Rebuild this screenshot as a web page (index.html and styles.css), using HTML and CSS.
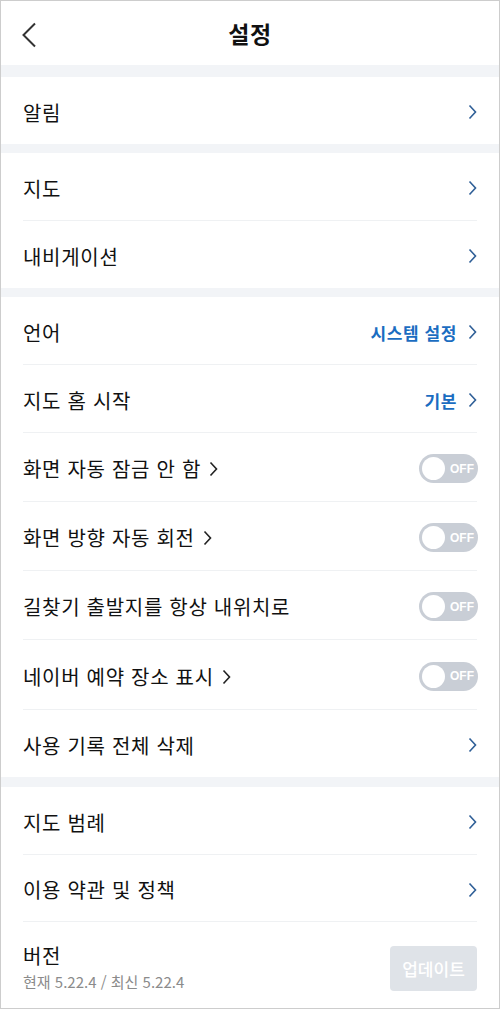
FILE: index.html
```html
<!DOCTYPE html>
<html lang="ko">
<head>
<meta charset="utf-8">
<title>설정</title>
<link rel="stylesheet" href="styles.css">
</head>
<body>
<div class="screen">
  <header class="header">
    <svg class="back" width="16" height="26" viewBox="0 0 16 26"><path d="M14 1.5 L2.5 13 L14 24.5" fill="none" stroke="#333" stroke-width="2"/></svg>
    <h1 class="title">설정</h1>
  </header>

  <div class="gap gap-12"></div>
  <section class="group">
    <div class="row last h67"><span class="label">알림</span><svg class="chev" width="9" height="16" viewBox="0 0 9 16"><path d="M1.5 1.5 L7.5 8 L1.5 14.5" fill="none" stroke="#2f5f97" stroke-width="1.6"/></svg></div>
  </section>

  <div class="gap gap-9"></div>
  <section class="group">
    <div class="row h68"><span class="label">지도</span><svg class="chev" width="9" height="16" viewBox="0 0 9 16"><path d="M1.5 1.5 L7.5 8 L1.5 14.5" fill="none" stroke="#2f5f97" stroke-width="1.6"/></svg></div>
    <div class="row last h67"><span class="label">내비게이션</span><svg class="chev" width="9" height="16" viewBox="0 0 9 16"><path d="M1.5 1.5 L7.5 8 L1.5 14.5" fill="none" stroke="#2f5f97" stroke-width="1.6"/></svg></div>
  </section>

  <div class="gap gap-9"></div>
  <section class="group">
    <div class="row h68"><span class="label">언어</span><span class="value">시스템 설정<svg class="chev" width="9" height="16" viewBox="0 0 9 16"><path d="M1.5 1.5 L7.5 8 L1.5 14.5" fill="none" stroke="#2f5f97" stroke-width="1.6"/></svg></span></div>
    <div class="row h68"><span class="label">지도 홈 시작</span><span class="value">기본<svg class="chev" width="9" height="16" viewBox="0 0 9 16"><path d="M1.5 1.5 L7.5 8 L1.5 14.5" fill="none" stroke="#2f5f97" stroke-width="1.6"/></svg></span></div>
    <div class="row h69"><span class="label">화면 자동 잠금 안 함<svg class="inchev" width="9" height="16" viewBox="0 0 9 16"><path d="M1.5 1.5 L7.5 8 L1.5 14.5" fill="none" stroke="#222" stroke-width="1.6"/></svg></span><span class="toggle"><span class="knob"></span><span class="off">OFF</span></span></div>
    <div class="row h69"><span class="label">화면 방향 자동 회전<svg class="inchev" width="9" height="16" viewBox="0 0 9 16"><path d="M1.5 1.5 L7.5 8 L1.5 14.5" fill="none" stroke="#222" stroke-width="1.6"/></svg></span><span class="toggle"><span class="knob"></span><span class="off">OFF</span></span></div>
    <div class="row h69"><span class="label">길찾기 출발지를 항상 내위치로</span><span class="toggle"><span class="knob"></span><span class="off">OFF</span></span></div>
    <div class="row h70"><span class="label">네이버 예약 장소 표시<svg class="inchev" width="9" height="16" viewBox="0 0 9 16"><path d="M1.5 1.5 L7.5 8 L1.5 14.5" fill="none" stroke="#222" stroke-width="1.6"/></svg></span><span class="toggle"><span class="knob"></span><span class="off">OFF</span></span></div>
    <div class="row last h67"><span class="label">사용 기록 전체 삭제</span><svg class="chev" width="9" height="16" viewBox="0 0 9 16"><path d="M1.5 1.5 L7.5 8 L1.5 14.5" fill="none" stroke="#2f5f97" stroke-width="1.6"/></svg></div>
  </section>

  <div class="gap gap-10"></div>
  <section class="group">
    <div class="row h68"><span class="label">지도 범례</span><svg class="chev" width="9" height="16" viewBox="0 0 9 16"><path d="M1.5 1.5 L7.5 8 L1.5 14.5" fill="none" stroke="#2f5f97" stroke-width="1.6"/></svg></div>
    <div class="row h67"><span class="label">이용 약관 및 정책</span><svg class="chev" width="9" height="16" viewBox="0 0 9 16"><path d="M1.5 1.5 L7.5 8 L1.5 14.5" fill="none" stroke="#2f5f97" stroke-width="1.6"/></svg></div>
    <div class="row last version">
      <div class="ver-info">
        <span class="label">버전</span>
        <span class="sub">현재 5.22.4 / 최신 5.22.4</span>
      </div>
      <span class="update">업데이트</span>
    </div>
  </section>
</div>
</body>
</html>
```

FILE: styles.css
```css
html, body {
  margin: 0;
  padding: 0;
  background: #fff;
}
body {
  font-family: "Noto Sans CJK KR", "Noto Sans", sans-serif;
  color: #111;
}
.screen {
  width: 500px;
  height: 1009px;
  box-sizing: border-box;
  border: 1px solid #cdcdcd;
  overflow: hidden;
  display: flex;
  flex-direction: column;
  background: #fff;
}
.header {
  height: 64px;
  flex: none;
  display: flex;
  align-items: center;
  justify-content: center;
  position: relative;
}
.back {
  position: absolute;
  left: 20px;
  top: 21px;
}
.title {
  margin: 0;
  font-size: 23px;
  font-weight: 700;
  color: #111;
  letter-spacing: 0.5px;
}
.gap {
  flex: none;
  background: #f2f4f7;
}
.gap-12 { height: 12px; }
.gap-9 { height: 9px; }
.gap-10 { height: 10px; }
.group {
  flex: none;
  display: flex;
  flex-direction: column;
}
.row {
  margin: 0 22px 0 22px;
  box-sizing: border-box;
  border-bottom: 1px solid #eff1f3;
  display: flex;
  align-items: center;
  justify-content: space-between;
  padding-top: 3px;
}
.row.last { border-bottom: none; }
.h67 { height: 67px; }
.h68 { height: 68px; }
.h69 { height: 69px; }
.h70 { height: 70px; }
.label {
  font-size: 20px;
  color: #111;
  display: flex;
  align-items: center;
  letter-spacing: 0.7px;
}
.chev {
  flex: none;
  margin-right: 0;
}
.inchev {
  margin-left: 8px;
  margin-top: 1px;
}
.value {
  display: flex;
  align-items: center;
  gap: 11px;
  font-size: 17px;
  font-weight: 700;
  color: #1b6dc1;
  letter-spacing: 0.6px;
}
.toggle {
  width: 59px;
  height: 29px;
  border-radius: 15px;
  background: #c9ced6;
  display: flex;
  align-items: center;
  box-sizing: border-box;
  padding-left: 3px;
  margin-right: -1px;
}
.knob {
  width: 23px;
  height: 23px;
  border-radius: 50%;
  background: #fff;
  flex: none;
}
.off {
  color: #fff;
  font-family: "Liberation Sans", Arial, sans-serif;
  font-weight: 700;
  font-size: 12px;
  margin-left: 5px;
}
.version {
  height: 85px;
  padding-top: 6px;
  padding-bottom: 0;
}
.ver-info {
  display: flex;
  flex-direction: column;
  gap: 0;
}
.ver-info .label {
  line-height: 27px;
}
.sub {
  font-size: 15px;
  color: #8b8b8b;
  line-height: 25px;
}
.update {
  width: 87px;
  height: 45px;
  border-radius: 4px;
  background: #dfe3e8;
  color: #fff;
  font-size: 17px;
  font-weight: 500;
  display: flex;
  align-items: center;
  justify-content: center;
  margin-top: 2px;
}
```
